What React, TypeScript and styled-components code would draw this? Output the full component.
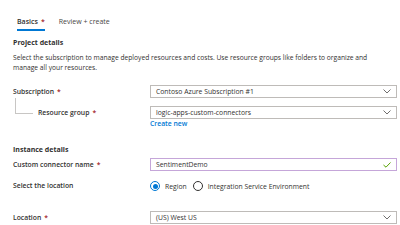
import styled, { createGlobalStyle } from 'styled-components'

const GlobalStyle = createGlobalStyle`
  html, body {
    margin: 0;
    padding: 0;
    background: #ffffff;
    font-family: 'Open Sans', 'Noto Sans', sans-serif;
    color: #323130;
  }
`

const Page = styled.div`
  width: 400px;
  height: 225px;
  overflow: hidden;
  padding: 0 3px 0 13px;
  box-sizing: border-box;
`

const Tabs = styled.div`
  display: flex;
  gap: 14px;
  padding: 17px 0 0 4px;
`

const Tab = styled.div<{ active?: boolean }>`
  font-size: 7px;
  line-height: 10px;
  padding-bottom: 2px;
  color: ${({ active }) => (active ? '#323130' : '#484644')};
  font-weight: ${({ active }) => (active ? 600 : 400)};
  border-bottom: 2px solid ${({ active }) => (active ? '#0078d4' : 'transparent')};
`

const Star = styled.span`
  color: #a4262c;
  margin-left: 3px;
`

const SectionTitle = styled.div<{ top: number }>`
  margin-top: ${({ top }) => top}px;
  font-size: 7px;
  font-weight: 700;
  line-height: 10px;
`

const Description = styled.p`
  margin: 5px 0 0;
  font-size: 6.7px;
  line-height: 10px;
  max-width: 375px;
`

const Row = styled.div<{ top: number }>`
  display: grid;
  grid-template-columns: 137px 1fr;
  align-items: center;
  margin-top: ${({ top }) => top}px;
`

const Label = styled.div<{ nested?: boolean }>`
  position: relative;
  font-size: 6.8px;
  font-weight: 600;
  line-height: 10px;
  padding-left: ${({ nested }) => (nested ? '25px' : '0')};

  ${({ nested }) =>
    nested &&
    `
    &::before {
      content: '';
      position: absolute;
      left: 2px;
      top: -10px;
      width: 17px;
      height: 15px;
      border-left: 1px solid #c8c6c4;
      border-bottom: 1px solid #c8c6c4;
    }
  `}
`

const Field = styled.div<{ valid?: boolean }>`
  display: flex;
  align-items: center;
  justify-content: space-between;
  height: 13px;
  box-sizing: border-box;
  padding: 0 5px 0 5px;
  border: 1px solid ${({ valid }) => (valid ? '#c5a6d9' : '#bebbb8')};
  font-size: 6.8px;
  color: #323130;
`

const Link = styled.div`
  font-size: 6.8px;
  line-height: 10px;
  color: #0078d4;
  font-weight: 600;
`

const Radios = styled.div`
  display: flex;
  align-items: center;
  gap: 6px;
  font-size: 6.8px;
`

const RadioOption = styled.label`
  display: flex;
  align-items: center;
  gap: 5px;
`

const RadioDot = styled.span<{ checked?: boolean }>`
  width: 10px;
  height: 10px;
  border-radius: 50%;
  box-sizing: border-box;
  border: 1px solid ${({ checked }) => (checked ? '#0078d4' : '#323130')};
  display: flex;
  align-items: center;
  justify-content: center;

  &::after {
    content: '';
    width: 5px;
    height: 5px;
    border-radius: 50%;
    background: ${({ checked }) => (checked ? '#0078d4' : 'transparent')};
  }
`

const Chevron = () => (
  <svg width="8" height="5" viewBox="0 0 8 5">
    <polyline points="0.5,0.5 4,4 7.5,0.5" fill="none" stroke="#605e5c" strokeWidth="0.9" />
  </svg>
)

const Check = () => (
  <svg width="8" height="6" viewBox="0 0 8 6">
    <polyline points="0.5,3 3,5.2 7.5,0.5" fill="none" stroke="#57a300" strokeWidth="1" />
  </svg>
)

export default function App() {
  return (
    <>
      <GlobalStyle />
      <Page>
        <Tabs>
          <Tab active>
            Basics<Star>*</Star>
          </Tab>
          <Tab>Review + create</Tab>
        </Tabs>

        <SectionTitle top={7}>Project details</SectionTitle>
        <Description>
          Select the subscription to manage deployed resources and costs. Use resource groups like folders to organize and
          manage all your resources.
        </Description>

        <Row top={12}>
          <Label>
            Subscription<Star>*</Star>
          </Label>
          <Field>
            <span>Contoso Azure Subscription #1</span>
            <Chevron />
          </Field>
        </Row>

        <Row top={8}>
          <Label nested>
            Resource group<Star>*</Star>
          </Label>
          <Field>
            <span>logic-apps-custom-connectors</span>
            <Chevron />
          </Field>
        </Row>
        <Row top={0}>
          <div />
          <Link>Create new</Link>
        </Row>

        <SectionTitle top={16}>Instance details</SectionTitle>

        <Row top={3}>
          <Label>
            Custom connector name<Star>*</Star>
          </Label>
          <Field valid>
            <span>SentimentDemo</span>
            <Check />
          </Field>
        </Row>

        <Row top={10}>
          <Label>Select the location</Label>
          <Radios>
            <RadioOption>
              <RadioDot checked />
              Region
            </RadioOption>
            <RadioOption>
              <RadioDot />
              Integration Service Environment
            </RadioOption>
          </Radios>
        </Row>

        <Row top={20}>
          <Label>
            Location<Star>*</Star>
          </Label>
          <Field>
            <span>(US) West US</span>
            <Chevron />
          </Field>
        </Row>
      </Page>
    </>
  )
}
